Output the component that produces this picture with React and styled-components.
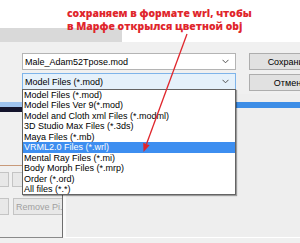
import React from 'react';
import styled, { createGlobalStyle } from 'styled-components';

const Global = createGlobalStyle`
  html, body {
    margin: 0;
    padding: 0;
    overflow: hidden;
    background: #f0f0f0;
  }
`

const Screen = styled.div`
  position: relative;
  width: 300px;
  height: 243px;
  overflow: hidden;
  background: #f0f0f0;
  font-family: "Liberation Sans", Arial, sans-serif;
  font-size: 9px;
  color: #000;
  display: flex;
  flex-direction: column;
`

const TopStrip = styled.div`
  height: 28px;
  background: #fff;
`

const TabBand = styled.div`
  height: 14px;
  display: flex;
  background: #fff;
`

const GrayTab = styled.div`
  width: 122px;
  background: #d9d9d9;
`

const Form = styled.div`
  padding: 11px 0 0 22px;
  display: flex;
  flex-direction: column;
  gap: 3px;
`

const FormRow = styled.div`
  display: flex;
  align-items: flex-start;
  gap: 13px;
`

const ComboWrap = styled.div`
  position: relative;
  width: 214px;
  flex: 0 0 auto;
`

const Combo = styled.div`
  box-sizing: border-box;
  height: 17px;
  display: flex;
  align-items: center;
  justify-content: space-between;
  padding: 0 6px 0 2px;
  background: ${p => (p.open ? '#e5f1fb' : '#fff')};
  border: 1px solid ${p => (p.open ? '#7eb4ea' : '#b4b4b4')};
`

const Chevron = () => (
  <svg width="7" height="5" viewBox="0 0 7 5">
    <path d="M0.5 0.8 L3.5 3.8 L6.5 0.8" fill="none" stroke="#555" strokeWidth="1" />
  </svg>
)

const Button = styled.div`
  box-sizing: border-box;
  width: 82px;
  height: 17px;
  flex: 0 0 auto;
  margin-top: ${p => p.offset || 0}px;
  display: flex;
  align-items: center;
  justify-content: center;
  background: #e1e1e1;
  border: 1px solid #adadad;
  white-space: nowrap;
`

const DropList = styled.div`
  position: absolute;
  top: 16px;
  left: 0;
  width: 214px;
  box-sizing: border-box;
  background: #fff;
  border: 1px solid #646464;
  box-shadow: 1px 1px 1px rgba(0, 0, 0, 0.35);
  z-index: 5;
`

const Item = styled.div`
  height: 10.44px;
  line-height: 10.44px;
  padding-left: 1px;
  white-space: nowrap;
  background: ${p => (p.selected ? '#3d8ef0' : 'transparent')};
  color: ${p => (p.selected ? '#fff' : '#000')};
`

const Lower = styled.div`
  margin-top: 3px;
  height: 144px;
  display: flex;
`

const LeftPanel = styled.div`
  width: 62px;
  flex: 0 0 auto;
  overflow: hidden;
  border-right: 1px solid #6e6e6e;
  border-bottom: 1px solid #8a8a8a;
  display: flex;
  flex-direction: column;
`

const Stripe = styled.div`
  height: ${p => p.h}px;
  background: ${p => p.color};
  margin-top: ${p => p.mt || 0}px;
`

const BrownLine = styled.div`
  margin-top: 53px;
  width: 22px;
  height: 1px;
  background: #c89a7a;
`

const BtnRow = styled.div`
  display: flex;
  gap: ${p => p.gap}px;
  margin-top: ${p => p.mt}px;
  height: ${p => p.h}px;
`

const SmallBtn = styled.div`
  box-sizing: border-box;
  width: ${p => p.w}px;
  flex: 0 0 auto;
  height: 100%;
  background: #e8e8e8;
  border: 1px solid #c4c4c4;
  border-left: ${p => (p.cut ? 'none' : '1px solid #c4c4c4')};
  color: #a0a0a0;
  display: flex;
  align-items: center;
  padding-left: 2px;
  white-space: nowrap;
`

const RightPanel = styled.div`
  flex: 1;
  border-left: 3px solid #fafafa;
  border-bottom: 1px solid #fff;
  background: #eeeeee;
  display: flex;
  flex-direction: column;
`

const BlueBar = styled.div`
  margin-top: 8px;
  height: 6px;
  background: #3c8de6;
`

const Annotation = styled.div`
  position: absolute;
  left: 67px;
  top: 7px;
  font-family: "Open Sans", "DejaVu Sans", sans-serif;
  font-weight: 800;
  font-size: 10.4px;
  line-height: 13px;
  color: #e0262c;
  white-space: nowrap;
  z-index: 10;
`

const ArrowSvg = styled.svg`
  position: absolute;
  left: 0;
  top: 0;
  z-index: 10;
  pointer-events: none;
`

const types = [
  'Model Files (*.mod)',
  'Model Files Ver 9(*.mod)',
  'Model and Cloth xml Files (*.modml)',
  '3D Studio Max Files (*.3ds)',
  'Maya Files (*.mb)',
  'VRML2.0 Files (*.wrl)',
  'Mental Ray Files (*.mi)',
  'Body Morph Files (*.mrp)',
  'Order (*.ord)',
  'All files (*.*)',
]

export default function App() {
  return (
    <Screen>
      <Global />
      <TopStrip />
      <TabBand>
        <GrayTab />
      </TabBand>
      <Form>
        <FormRow>
          <ComboWrap>
            <Combo>
              <span>Male_Adam52Tpose.mod</span>
              <Chevron />
            </Combo>
          </ComboWrap>
          <Button>Сохранить</Button>
        </FormRow>
        <FormRow>
          <ComboWrap>
            <Combo open>
              <span>Model Files (*.mod)</span>
              <Chevron />
            </Combo>
            <DropList>
              {types.map((t, i) => (
                <Item key={t} selected={i === 5}>{t}</Item>
              ))}
            </DropList>
          </ComboWrap>
          <Button offset={1}>Отмена</Button>
        </FormRow>
      </Form>
      <Lower>
        <LeftPanel>
          <Stripe h={5} mt={8} color="#9fc3ee" />
          <Stripe h={5} color="#14142c" />
          <BrownLine />
          <BtnRow mt={6} h={15} gap={3}>
            <SmallBtn w={9} cut />
            <SmallBtn w={40} />
          </BtnRow>
          <BtnRow mt={11} h={17} gap={4}>
            <SmallBtn w={9} cut />
            <SmallBtn w={60}>Remove Pi...</SmallBtn>
          </BtnRow>
        </LeftPanel>
        <RightPanel>
          <BlueBar />
        </RightPanel>
      </Lower>
      <Annotation>
        сохраняем в формате wrl, чтобы
        <br />
        в Марфе открылся цветной obj
      </Annotation>
      <ArrowSvg width="300" height="243" viewBox="0 0 300 243">
        <line x1="187" y1="34" x2="146.5" y2="144" stroke="#e0262c" strokeWidth="1.3" />
        <polygon points="143.5,152 143.2,142.8 149.6,145.2" fill="#e0262c" />
      </ArrowSvg>
    </Screen>
  );
}
